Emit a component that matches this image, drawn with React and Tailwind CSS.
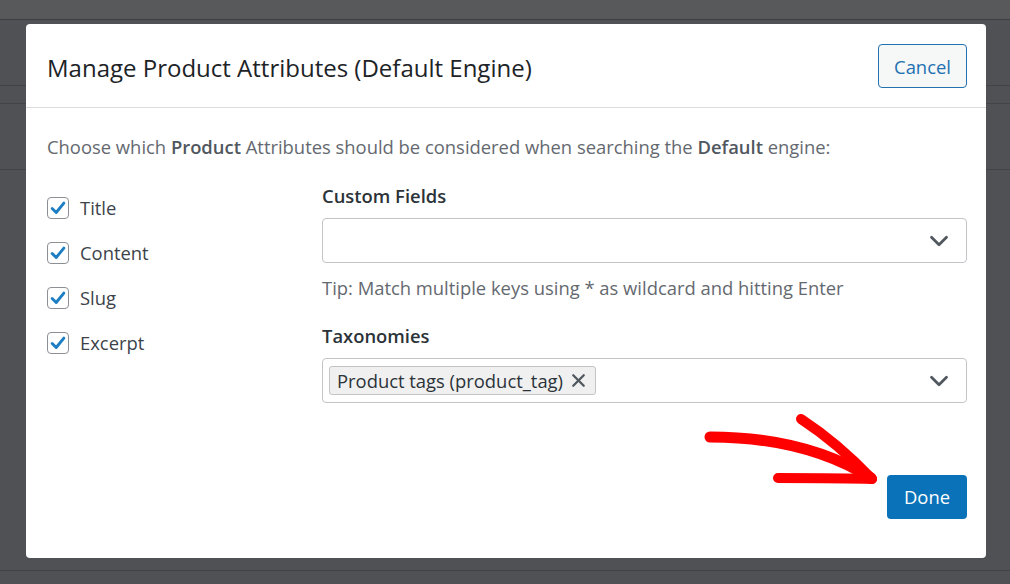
import { ChevronDown, X } from 'lucide-react';

const font = { fontFamily: '"Open Sans", "Noto Sans", sans-serif' };

function Check({ label }) {
	return (
		<label className="flex items-center gap-[11px] h-[45px]">
			<span className="w-[22px] h-[22px] border border-[#8c8f94] rounded-[4px] bg-white flex items-center justify-center">
				<svg viewBox="0 0 20 20" className="w-[18px] h-[18px]">
					<path d="M3.5 10.5 L8 15 L16.5 4.5" fill="none" stroke="#1e7ec3" strokeWidth="3.2" strokeLinecap="round" strokeLinejoin="round" />
				</svg>
			</span>
			<span className="text-[18.4px] text-[#3c434a]">{label}</span>
		</label>
	);
}

function Select({ children }) {
	return (
		<div className="h-[45px] border border-[#c3c4c7] rounded-[4px] bg-white flex items-center pl-[6px] pr-[12px]">
			<div className="flex-1 flex items-center">{children}</div>
			<ChevronDown className="w-[30px] h-[30px] text-[#50575e]" strokeWidth={2.2} />
		</div>
	);
}

export default function App() {
	return (
		<div className="relative w-[1010px] h-[584px] bg-[#505155] overflow-hidden" style={font}>
			{/* background rows behind the overlay */}
			<div className="flex flex-col h-full">
				<div className="h-[20px] bg-[#58595b] border-b border-[#3e3f42]" />
				<div className="h-[66px] border-b border-[#434447]" />
				<div className="h-[18px] border-b border-[#434447]" />
				<div className="h-[66px] border-b border-[#434447]" />
				<div className="flex-1 border-b border-[#434447]" />
				<div className="h-[13px]" />
			</div>

			<div className="absolute left-[26px] top-[24px] w-[960px] h-[534px] bg-white rounded-[4px] flex flex-col">
				<div className="h-[84px] border-b border-[#dcdcde] flex items-center justify-between pl-[21px] pr-[19px]">
					<h2 className="text-[24px] text-[#1d2327] tracking-[0px] mt-[4px]">Manage Product Attributes (Default Engine)</h2>
					<button className="w-[89px] h-[44px] border border-[#2271b1] rounded-[4px] bg-[#f6f7f7] text-[#2271b1] text-[18.4px] pt-[2px]">Cancel</button>
				</div>

				<div className="flex-1 flex flex-col pl-[21px] pr-[19px]">
					<p className="mt-[27px] text-[18.4px] text-[#646970] leading-[24px]">
						Choose which <b className="font-semibold text-[#50575e]">Product</b> Attributes should be considered when searching the <b className="font-semibold text-[#50575e]">Default</b> engine:
					</p>

					<div className="flex mt-[14px]">
						<div className="w-[275px] flex flex-col pt-[12px]">
							<Check label="Title" />
							<Check label="Content" />
							<Check label="Slug" />
							<Check label="Excerpt" />
						</div>
						<div className="flex-1 flex flex-col pt-[10px]">
							<div className="text-[18.4px] font-semibold text-[#2c3338] leading-[24px] mt-[1px]">Custom Fields</div>
							<div className="mt-[10px]">
								<Select />
							</div>
							<div className="mt-[13px] text-[18.4px] text-[#646970] leading-[24px]">Tip: Match multiple keys using * as wildcard and hitting Enter</div>
							<div className="mt-[24px] text-[18.4px] font-semibold text-[#2c3338] leading-[24px]">Taxonomies</div>
							<div className="mt-[10px]">
								<Select>
									<span className="h-[29px] flex items-center gap-[5px] pl-[7px] pr-[6px] bg-[#f0f0f1] border border-[#c3c4c7] rounded-[3px] text-[18.4px] text-[#2c3338]">
										Product tags (product_tag)
										<X className="w-[21px] h-[21px] text-[#50575e]" strokeWidth={2.6} />
									</span>
								</Select>
							</div>
						</div>
					</div>

					<div className="mt-auto mb-[39px] flex justify-end">
						<button className="w-[80px] h-[44px] bg-[#0a72b8] rounded-[4px] text-white text-[18.4px]">Done</button>
					</div>
				</div>
			</div>

			<svg className="absolute left-0 top-0 pointer-events-none" width="1010" height="584">
				<g fill="none" stroke="#ff0000" strokeLinecap="round" strokeLinejoin="round">
					<path d="M710 437 C 760 437, 820 446, 871 478" strokeWidth="11" />
					<path d="M801 419 C 830 438, 852 458, 872 479" strokeWidth="10" />
					<path d="M778 478 C 810 478, 845 478, 872 479" strokeWidth="10" />
				</g>
			</svg>
		</div>
	);
}
